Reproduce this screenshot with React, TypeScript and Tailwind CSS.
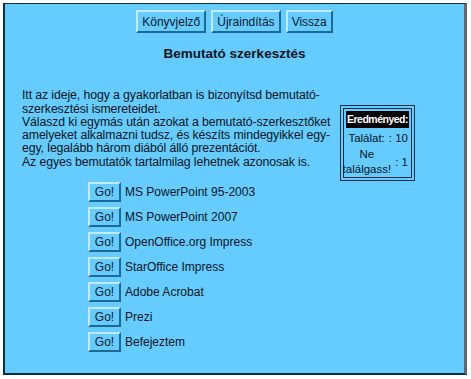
const tools = [
    'MS PowerPoint 95-2003',
    'MS PowerPoint 2007',
    'OpenOffice.org Impress',
    'StarOffice Impress',
    'Adobe Acrobat',
    'Prezi',
    'Befejeztem',
];

const btnCls =
    'bg-[#66ccff] text-[12px] leading-none text-[#0a1a2a] border-2 border-t-[#bfeaff] border-l-[#bfeaff] border-r-[#1c6a94] border-b-[#1c6a94]';

export default function App() {
    return (
        <div className="w-[471px] h-[379px] bg-white pl-[3px] pt-[3px] font-['Liberation_Sans',Arial,sans-serif] text-black">
            <div className="w-[464px] h-[372px] bg-[#66ccff] border-l-2 border-t border-b-2 border-r-[3px] border-l-[#0d2e40] border-t-[#0d2e40] border-b-[#0d2e40] border-r-[#5a6a74] flex flex-col">
                <div className="flex justify-center gap-[5px] mt-[6px]">
                    <button className={btnCls + ' h-[23px] px-[4px]'}>Könyvjelző</button>
                    <button className={btnCls + ' h-[23px] px-[4px]'}>Újraindítás</button>
                    <button className={btnCls + ' h-[23px] px-[4px]'}>Vissza</button>
                </div>
                <p className="text-center font-bold text-[13.5px] mt-[11px] text-[#0a1420]">Bemutató szerkesztés</p>

                <div className="flex items-start mt-[25px]">
                    <div className="flex flex-col w-[333px]">
                        <div className="pl-[17px] whitespace-nowrap text-[12.3px] tracking-[-0.1px] leading-[13.3px] text-[#0a1420]">
                            <p>Itt az ideje, hogy a gyakorlatban is bizonyítsd bemutató-<br />szerkesztési ismereteidet.</p>
                            <p>Válaszd ki egymás után azokat a bemutató-szerkesztőket<br />amelyeket alkalmazni tudsz, és készíts mindegyikkel egy-<br />egy, legalább három diából álló prezentációt.</p>
                            <p>Az egyes bemutatók tartalmilag lehetnek azonosak is.</p>
                        </div>
                        <div className="flex flex-col gap-[5px] pl-[83px] mt-[13px]">
                            {tools.map(t => (
                                <div key={t} className="flex items-center gap-[4px]">
                                    <button className={btnCls + ' h-[20px] w-[33px]'}>Go!</button>
                                    <span className="text-[12px] text-[#0a1420]">{t}</span>
                                </div>
                            ))}
                        </div>
                    </div>
                    <div className="ml-[2px] mt-[16px] w-[75px] h-[76px] border-[4px] border-double border-[#0d2e40] px-[2px] pt-[2px] text-[11.5px] text-[#0a1420] whitespace-nowrap">
                        <div className="bg-black text-white font-bold text-[10.5px] tracking-[-0.5px] leading-[17px] text-center">Eredményed:</div>
                        <div className="flex justify-end gap-[4px] mt-[3px] pr-[1px] leading-[15px]">
                            <span>Találat:</span>
                            <span>: 10</span>
                        </div>
                        <div className="flex justify-end items-center gap-[4px] pr-[1px] mt-[1px]">
                            <span className="text-center leading-[15px]">Ne<br />találgass!</span>
                            <span>: 1</span>
                        </div>
                    </div>
                </div>
            </div>
        </div>
    );
}
